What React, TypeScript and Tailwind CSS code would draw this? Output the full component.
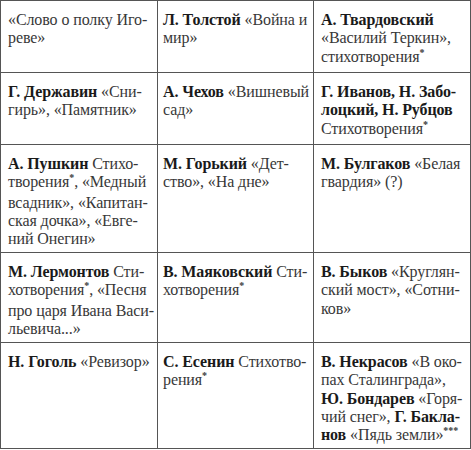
import React from "react"

type Part = string | { b: string } | { s: string }

// each cell is a list of lines, each line a list of parts
const rows: Part[][][][] = [
  [
    [["«Слово о полку Иго-"], ["реве»"]],
    [[{ b: "Л. Толстой" }, " «Война и"], ["мир»"]],
    [[{ b: "А. Твардовский" }], ["«Василий Теркин»,"], ["стихотворения", { s: "*" }]],
  ],
  [
    [[{ b: "Г. Державин" }, " «Сни-"], ["гирь», «Памятник»"]],
    [[{ b: "А. Чехов" }, " «Вишневый"], ["сад»"]],
    [[{ b: "Г. Иванов, Н. Забо-" }], [{ b: "лоцкий, Н. Рубцов" }], ["Стихотворения", { s: "*" }]],
  ],
  [
    [
      [{ b: "А. Пушкин" }, " Стихо-"],
      ["творения", { s: "*" }, ", «Медный"],
      ["всадник», «Капитан-"],
      ["ская дочка», «Евге-"],
      ["ний Онегин»"],
    ],
    [[{ b: "М. Горький" }, " «Дет-"], ["ство», «На дне»"]],
    [[{ b: "М. Булгаков" }, " «Белая"], ["гвардия» (?)"]],
  ],
  [
    [
      [{ b: "М. Лермонтов" }, " Сти-"],
      ["хотворения", { s: "*" }, ", «Песня"],
      ["про царя Ивана Васи-"],
      ["льевича...»"],
    ],
    [[{ b: "В. Маяковский" }, " Сти-"], ["хотворения", { s: "*" }]],
    [[{ b: "В. Быков" }, " «Круглян-"], ["ский мост», «Сотни-"], ["ков»"]],
  ],
  [
    [[{ b: "Н. Гоголь" }, " «Ревизор»"]],
    [[{ b: "С. Есенин" }, " Стихотво-"], ["рения", { s: "*" }]],
    [
      [{ b: "В. Некрасов" }, " «В око-"],
      ["пах Сталинграда»,"],
      [{ b: "Ю. Бондарев" }, " «Горя-"],
      ["чий снег», ", { b: "Г. Бакла-" }],
      [{ b: "нов" }, " «Пядь земли»", { s: "***" }],
    ],
  ],
]

function renderPart(p: Part, i: number) {
  if (typeof p === "string") return <span key={i}>{p}</span>
  if ("b" in p)
    return (
      <span key={i} className="font-bold text-[#1a1a1a]">
        {p.b}
      </span>
    )
  return (
    <span key={i} className="relative -top-[6px] text-[10px] font-bold">
      {p.s}
    </span>
  )
}

export default function App() {
  return (
    <div className="w-[471px] h-[450px] bg-white font-['Liberation_Serif']">
      <div className="grid grid-cols-[157px_156px_157px] grid-rows-[72px_72px_108px_90px_106px] border-l border-t border-[#555] text-[#383838] text-[16px] leading-[18.3px] tracking-[-0.1px]">
        {rows.map((row, r) =>
          row.map((cell, c) => (
            <div
              key={`${r}-${c}`}
              className={`border-r border-b border-[#555] pt-[10px] ${c === 1 ? "pl-[5px]" : "pl-[7px]"}`}
            >
              {cell.map((line, li) => (
                <div key={li} className="whitespace-nowrap">
                  {line.map(renderPart)}
                </div>
              ))}
            </div>
          ))
        )}
      </div>
    </div>
  )
}
